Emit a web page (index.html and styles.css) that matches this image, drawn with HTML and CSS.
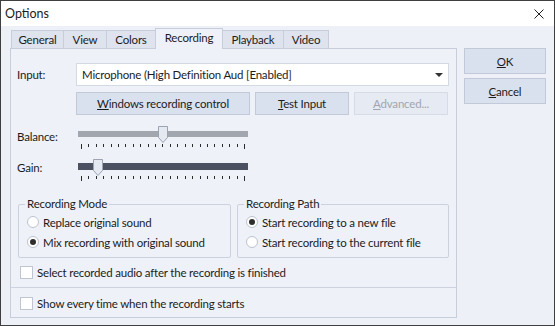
FILE: index.html
```html
<!DOCTYPE html>
<html lang="en">
<head>
    <meta charset="UTF-8">
    <title>Options</title>
    <link rel="stylesheet" href="styles.css">
</head>
<body>
    <div class="window">
        <div class="titlebar">
            <span class="title">Options</span>
            <svg class="close" width="10" height="10" viewBox="0 0 10 10">
                <path d="M0.5 0.5 L9.5 9.5 M9.5 0.5 L0.5 9.5" stroke="#222" stroke-width="1" fill="none"/>
            </svg>
        </div>
        <div class="dialog">
            <div class="main">
                <div class="tabs">
                    <div class="tab tab-general">General</div>
                    <div class="tab tab-view">View</div>
                    <div class="tab tab-colors">Colors</div>
                    <div class="tab tab-recording active">Recording</div>
                    <div class="tab tab-playback">Playback</div>
                    <div class="tab tab-video">Video</div>
                </div>
                <div class="panel">
                    <div class="input-row">
                        <span class="field-label">Input:</span>
                        <div class="combo">
                            <span>Microphone (High Definition Aud [Enabled]</span>
                            <span class="arrow"></span>
                        </div>
                    </div>
                    <div class="btn-row">
                        <button class="btn btn-wide"><u>W</u>indows recording control</button>
                        <button class="btn"><u>T</u>est Input</button>
                        <button class="btn disabled"><u>A</u>dvanced...</button>
                    </div>

                    <div class="slider-row balance">
                        <span class="field-label">Balance:</span>
                        <div class="slider">
                            <div class="track"></div>
                            <svg class="thumb" style="left: 80px" width="10" height="17" viewBox="0 0 10 17">
                                <path d="M0.5 0.5 H9.5 V11.5 L5 16.5 L0.5 11.5 Z" fill="#e4e9f2" stroke="#9ba3b1"/>
                            </svg>
                            <div class="ticks" data-ticks></div>
                        </div>
                    </div>
                    <div class="slider-row gain">
                        <span class="field-label">Gain:</span>
                        <div class="slider">
                            <div class="track"></div>
                            <svg class="thumb" style="left: 15px" width="10" height="17" viewBox="0 0 10 17">
                                <path d="M0.5 0.5 H9.5 V11.5 L5 16.5 L0.5 11.5 Z" fill="#e4e9f2" stroke="#9ba3b1"/>
                            </svg>
                            <div class="ticks" data-ticks></div>
                        </div>
                    </div>

                    <div class="groups">
                        <fieldset class="group group-mode">
                            <legend>Recording Mode</legend>
                            <div class="radio"><span class="dot"></span>Replace original sound</div>
                            <div class="radio"><span class="dot checked"></span>Mix recording with original sound</div>
                        </fieldset>
                        <fieldset class="group group-path">
                            <legend>Recording Path</legend>
                            <div class="radio"><span class="dot checked"></span>Start recording to a new file</div>
                            <div class="radio"><span class="dot"></span>Start recording to the current file</div>
                        </fieldset>
                    </div>

                    <div class="check"><span class="box"></span>Select recorded audio after the recording is finished</div>
                    <div class="sep"></div>
                    <div class="check"><span class="box"></span>Show every time when the recording starts</div>
                </div>
            </div>
            <div class="side">
                <button class="btn side-btn"><u>O</u>K</button>
                <button class="btn side-btn"><u>C</u>ancel</button>
            </div>
        </div>
    </div>
    <script>
        // fill the trackbar tick marks
        document.querySelectorAll('[data-ticks]').forEach(row => {
          for (let i = 0; i < 23; i++) {
            const tick = document.createElement('span');
            tick.className = (i === 0 || i === 22) ? 'tick long' : 'tick';
            row.appendChild(tick);
          }
        })
    </script>
</body>
</html>
```
FILE: styles.css
```css
body {
    margin: 0;
    font-family: Lato, "Noto Sans", sans-serif;
    font-size: 11.5px;
    letter-spacing: -0.2px;
    color: #1c1c1c;
    white-space: nowrap;
}

.window {
    width: 555px;
    height: 326px;
    box-sizing: border-box;
    border: 1px solid #3f3f3f;
    background: #edf0f7;
    display: flex;
    flex-direction: column;
}

.titlebar {
    height: 25px;
    flex: none;
    background: #fff;
    display: flex;
    align-items: center;
    justify-content: space-between;
    padding: 0 10px 0 4px;
}
.title {
    font-size: 12.5px;
    letter-spacing: 0;
}

.dialog {
    display: flex;
    padding: 0 8px 0 9px;
}
.main {
    width: 447px;
    display: flex;
    flex-direction: column;
}

/* tabs */
.tabs {
    display: flex;
    align-items: flex-end;
    height: 20px;
    margin-top: 2px;
    padding-left: 2px;
    position: relative;
    z-index: 1;
}
.tab {
    height: 18px;
    box-sizing: border-box;
    margin-left: -1px;
    border: 1px solid #c7cedb;
    border-bottom: none;
    background: #dee3ed;
    display: flex;
    align-items: center;
    justify-content: center;
}
.tab.active {
    height: 21px;
    margin-bottom: -1px;
    background: #eef1f7;
    padding-bottom: 3px;
}
.tab-general { width: 53px; }
.tab-view { width: 44px; }
.tab-colors { width: 50px; }
.tab-recording { width: 68px; }
.tab-playback { width: 62px; }
.tab-video { width: 46px; }

.panel {
    height: 270px;
    box-sizing: border-box;
    border: 1px solid #c7cedb;
    background: #eef1f7;
    padding: 0 7px 0 6px;
}

.field-label {
    width: 59px;
    flex: none;
}

.input-row {
    display: flex;
    align-items: center;
    margin-top: 14px;
}
.combo {
    flex: 1;
    height: 23px;
    box-sizing: border-box;
    border: 1px solid #d4dae4;
    background: #fff;
    display: flex;
    align-items: center;
    justify-content: space-between;
    padding: 0 5px 0 5px;
}
.arrow {
    width: 0;
    height: 0;
    border-left: 4px solid transparent;
    border-right: 4px solid transparent;
    border-top: 4px solid #333;
}

.btn-row {
    display: flex;
    gap: 5px;
    margin-top: 6px;
    padding-left: 59px;
}
.btn {
    height: 23px;
    width: 94px;
    box-sizing: border-box;
    padding: 0;
    border: 1px solid #c2cad9;
    background: #dae1ee;
    font: inherit;
    letter-spacing: inherit;
    color: inherit;
}
.btn-wide {
    width: 174px;
}
.btn.disabled {
    background: #e6eaf2;
    border-color: #d6dce6;
    color: #a0a6b1;
}

/* trackbars */
.slider-row {
    display: flex;
    align-items: flex-start;
}
.slider-row .field-label {
    width: 61px;
    margin-top: 2px;
}
.balance .field-label {
    margin-top: 4px;
}
.balance {
    margin-top: 11px;
}
.gain {
    margin-top: 10px;
}
.slider {
    width: 170px;
    height: 23px;
    position: relative;
}
.track {
    margin-top: 5px;
    height: 6px;
    background: #a2a6af;
}
.gain .track {
    margin-top: 4px;
    height: 7px;
    background: #4b5161;
}
.thumb {
    position: absolute;
    top: 0;
}
.ticks {
    display: flex;
    justify-content: space-between;
    align-items: flex-start;
    margin: 7px 3px 0 3px;
}
.gain .ticks {
    margin-top: 6px;
}
.tick {
    width: 1px;
    height: 3px;
    background: #2b2b2b;
}
.tick.long {
    height: 5px;
}

/* group boxes */
.groups {
    display: flex;
    gap: 6px;
    margin: 14px 0 0 1px;
}
.group {
    margin: 0;
    box-sizing: border-box;
    border: 1px solid #ccd2dd;
    border-radius: 2px;
    padding: 0 8px 5px 8px;
}
.group-mode { width: 213px; }
.group-path { width: 212px; }
.group legend {
    padding: 0 2px;
    margin-left: -2px;
    line-height: 16px;
}
.radio {
    display: flex;
    align-items: center;
    gap: 4px;
    height: 20px;
}
.dot {
    width: 12px;
    height: 12px;
    box-sizing: border-box;
    border: 1px solid #bcc3cf;
    border-radius: 50%;
    background: #fff;
    display: flex;
    align-items: center;
    justify-content: center;
}
.dot.checked::after {
    content: "";
    width: 6px;
    height: 6px;
    border-radius: 50%;
    background: #2e2e2e;
}

/* checkboxes */
.check {
    display: flex;
    align-items: center;
    gap: 4px;
    height: 20px;
    margin: 4px 0 0 3px;
}
.box {
    width: 13px;
    height: 13px;
    box-sizing: border-box;
    border: 1px solid #c0c6d1;
    background: #fff;
}
.sep {
    height: 1px;
    background: #ced4df;
    margin: 5px -7px 0 -6px;
}
.sep + .check {
    margin-top: 5px;
}

.side {
    display: flex;
    flex-direction: column;
    gap: 4px;
    margin: 22px 0 0 7px;
}
.side-btn {
    width: 82px;
    height: 26px;
}
```
